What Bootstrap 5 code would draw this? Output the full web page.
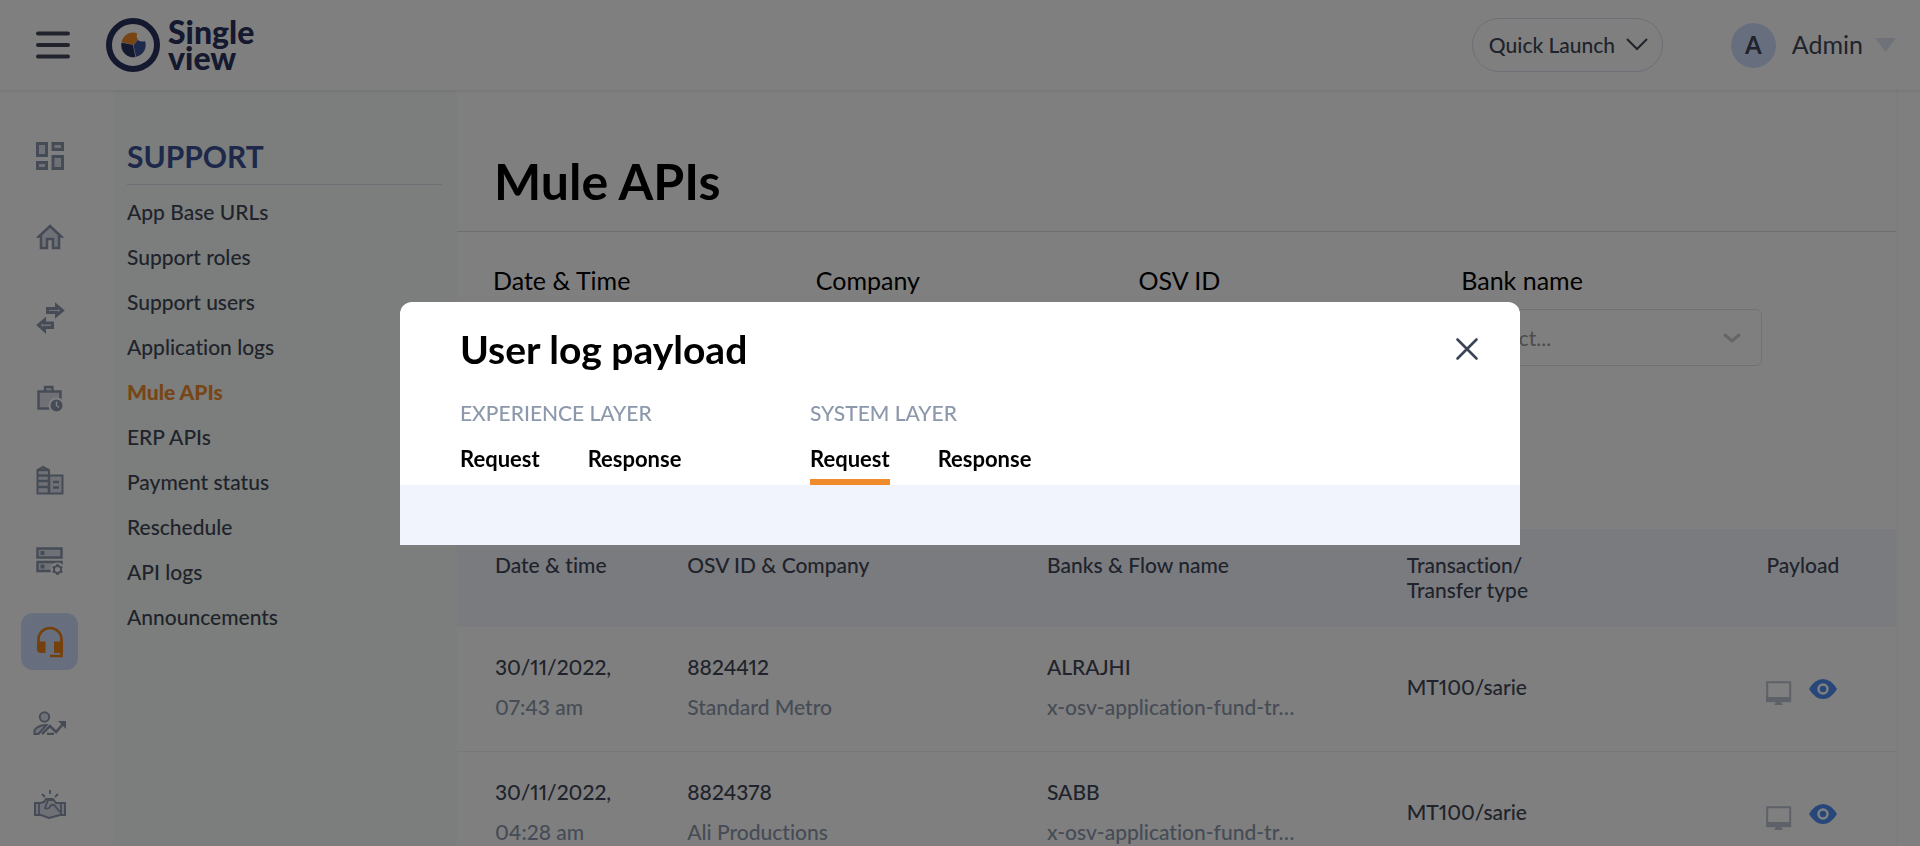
<!DOCTYPE html>
<html lang="en">
<head>
<meta charset="utf-8">
<meta name="viewport" content="width=device-width, initial-scale=1">
<title>Mule APIs</title>
<link href="https://cdn.jsdelivr.net/npm/bootstrap@5.3.0/dist/css/bootstrap.min.css" rel="stylesheet">
<style>
:root{--ink:#404757;--muted:#8c98ac;--accent:#f08b2c;--navy:#2a325e;--sky:#cfdffd}
body{font-family:Lato,"Liberation Sans",sans-serif;font-size:20px;line-height:25px;font-weight:500;font-variant-ligatures:none;color:var(--ink)}
.topbar{height:90px;padding:0 24px 0 36px;box-shadow:0 1px 3px rgba(0,0,0,.1);z-index:2}
.brandtext{font-size:32px;line-height:26px;font-weight:900;color:var(--navy)}
.quick{height:54px;width:191px;margin-right:68px;border:1px solid #dcdcee;border-radius:27px;padding:0 14px 2px 16px;font-size:21px;font-weight:500;color:var(--ink)}
.avatar{width:45px;height:45px;background:var(--sky);font-size:24px;padding-bottom:2px}
.admin{font-size:25px;font-weight:400;color:var(--ink);padding-bottom:2px}
.rail{width:113px;padding:37px 0 0 21px;gap:24px}
.rail a{width:57px;height:57px;border-radius:12px}
.rail a.active{background:var(--sky)}
.rail svg{fill:#dfe3ef;stroke:var(--muted);stroke-width:2}
.submenu{width:344px;background:#f7fcf9;padding:48px 15px 0 14px}
.submenu h2{font-size:30px;line-height:36px;font-weight:700;color:#3a5096;padding-bottom:10px;margin-bottom:4px;border-bottom:1px solid #dcdfe8}
.submenu a{font-size:21px;line-height:45px;color:var(--ink)}
.submenu a.active{color:var(--accent);font-weight:900}
.content{margin-right:24px;box-shadow:1px 0 2px rgba(0,0,0,.04)}
.pagetitle{font-size:50px;line-height:60px;font-weight:700;color:#000;padding:61px 37px 20px;border-bottom:1px solid #dcdcdc}
.filters{padding:33px 112px 163px 36px}
.filters label{font-size:25px;line-height:30px;font-weight:400;color:#000;margin-bottom:14px}
.filters .col{padding-right:22px}
.filters .form-control,.filters .form-select{height:57px;border:1px solid #dfe3ea;border-radius:6px;font-size:21px;padding-left:18px;color:#999}
.filters .form-select{background-size:18px 10px;background-position:right 20px center;background-image:url("data:image/svg+xml,%3Csvg xmlns='http://www.w3.org/2000/svg' viewBox='0 0 18 10'%3E%3Cpath d='M2 2l7 6 7-6' fill='none' stroke='%23ccc' stroke-width='3' stroke-linecap='round'/%3E%3C/svg%3E")}
.logs{table-layout:fixed;font-size:21px;font-variant-numeric:proportional-nums}
.logs th{background:#f4f6fe;height:98px;padding:23px 0 0;font-weight:500;color:var(--ink);vertical-align:top;border:0}
.logs td{height:124px;padding:20px 0 0;vertical-align:top;color:var(--ink);border-bottom:1px solid #f0f0f4}
.logs th:first-child,.logs td:first-child{padding-left:38px}
.logs td span{display:block;line-height:40px}
.logs .sub{color:var(--muted)}
.logs td.mid{padding-top:40px}
.logs td.acts{padding-top:52px}
.modal-dialog.payload{max-width:1120px}
.payload .modal-content{border:0;border-radius:12px 12px 0 0}
.payload .modal-header{border:0;padding:21px 36px 0 60px}
.payload h1{font-size:39px;line-height:52px;font-weight:700;color:#000}
.payload h3{font-size:21px;line-height:26px;font-weight:500;color:var(--muted);margin-bottom:18px}
.layers{padding:25px 60px 0}
.layer{width:350px}
.tabs{gap:48px}
.tabs button{border:0;border-bottom:6px solid transparent;background:none;padding:0 0 5px;font-size:22px;line-height:30px;font-weight:700;color:#000}
.tabs button.active{border-color:var(--accent)}
.payload .modal-body{background:#f1f4fd;height:60px;flex:none}
</style>
</head>
<body class="modal-open overflow-hidden">
<div class="vh-100 d-flex flex-column overflow-hidden">
  <header class="topbar d-flex align-items-center flex-shrink-0 bg-white position-relative">
    <button class="btn p-0 border-0 d-flex" aria-label="Menu"><svg width="34" height="28" stroke="#404757" stroke-width="4" stroke-linecap="round"><path d="M2 2.500h30M2 14h30M2 25.500h30"/></svg></button>
    <a href="#" class="d-flex align-items-center text-decoration-none flex-grow-1">
      <svg class="ms-4 me-2" width="66" height="54" viewBox="-12 0 66 54"><circle cx="27" cy="27" r="24" fill="#fff" stroke="#2a325e" stroke-width="6"/><path d="M27 27L15.500 24A12 12 0 0 1 31 15q-1 4 1 7z" fill="#f08b2c"/><path d="M27 27L15.500 24.500A12 12 0 0 0 29.500 39z" fill="#2a325e"/><path d="M27.500 27L32 22q3 2.500 7 1A12 12 0 0 1 30 38.800z" fill="#3c5498"/></svg>
      <span class="brandtext">Single<br>view</span>
    </a>
    <button class="quick bg-white d-flex align-items-center justify-content-between">Quick Launch <svg width="22" height="13" fill="none" stroke="#404757" stroke-width="2"><path d="M1 1l10 10L21 1"/></svg></button>
    <div class="d-flex align-items-center">
      <span class="avatar rounded-circle d-flex align-items-center justify-content-center fw-bold me-3">A</span>
      <a href="#" class="admin text-decoration-none me-2">Admin</a>
      <svg class="ms-1" width="21" height="14"><path d="M0 0h21L10.500 14z" fill="#dee5f2"/></svg>
    </div>
  </header>
  <div class="d-flex flex-grow-1 overflow-hidden">
    <nav class="rail d-flex flex-column flex-shrink-0 bg-white" aria-label="Sections">
      <a href="#" class="d-flex flex-shrink-0 align-items-center justify-content-center" aria-label="Dashboard"><svg width="28" height="28"><path style="stroke-width:3" d="M1.500 1.500h9v12h-9zM17 1.500h9.500v6H17zM17 14.500h9.500v12H17zM1.500 20.500h9v6h-9z"/></svg></a>
      <a href="#" class="d-flex flex-shrink-0 align-items-center justify-content-center" aria-label="Home"><svg width="28" height="26"><path d="M3 12.500L14 2l11 10.500h-2V24h-6v-9h-6v9H5V12.500z" style="stroke-width:2.600"/></svg></a>
      <a href="#" class="d-flex flex-shrink-0 align-items-center justify-content-center" aria-label="Transfers"><svg width="30" height="32"><path style="stroke-width:3" d="M12.500 6.500h9v-3l6 5-6 5v-3h-9zM17.500 21h-8v-3l-6 5 6 5.500v-3h8z"/></svg></a>
      <a href="#" class="d-flex flex-shrink-0 align-items-center justify-content-center" aria-label="Schedule"><svg width="28" height="27"><path style="stroke-width:2.400" d="M2.500 6.500h22v17h-22zM9 6V2h7.500v4"/><circle cx="20.500" cy="20.500" r="7" style="fill:#8c98ac;stroke:#fff"/><path d="M20.500 16.500v4l2.500 2" style="fill:none;stroke:#fff;stroke-width:1.500"/></svg></a>
      <a href="#" class="d-flex flex-shrink-0 align-items-center justify-content-center" aria-label="Companies"><svg width="28" height="30"><path d="M1.500 28.500V5L7 2l6 3v5.500h13.500v18z"/><path d="M13 10v18M2 5h11M2 10.500h11M2 16h11M2 22h11M17 17h6M17 22.500h6" style="stroke-width:2.600"/></svg></a>
      <a href="#" class="d-flex flex-shrink-0 align-items-center justify-content-center" aria-label="Server settings"><svg width="28" height="28"><path style="stroke-width:2.500" d="M1.500 1.500h24v9h-24zM1.500 15h24v9h-24z"/><path d="M6.500 4v4M6.500 17.500v4" style="stroke-width:4"/><circle cx="21.500" cy="22.500" r="7" style="fill:#fff;stroke:none"/><circle cx="21.500" cy="22.500" r="3.500" style="fill:#fff"/><path d="M21.500 17v2M21.500 26v2M16.800 19.800l1.700 1M24.500 24.200l1.700 1M16.800 25.200l1.700-1M24.500 20.800l1.700-1" style="stroke-width:2.400"/></svg></a>
      <a href="#" class="active d-flex flex-shrink-0 align-items-center justify-content-center" aria-label="Support"><svg width="26" height="32" style="stroke:#e98018;fill:none"><path style="stroke-width:2.600" d="M1.500 18v-4.500a11.500 11.500 0 0 1 23 0V30H13"/><path style="fill:#e98018;stroke:none" d="M0 15.500h8.500V27H4q-4 0-4-4zM17 15.500h9V27h-9z"/></svg></a>
      <a href="#" class="d-flex flex-shrink-0 align-items-center justify-content-center" aria-label="Growth"><svg width="34" height="24"><circle cx="11.500" cy="6" r="4.700"/><path d="M1.500 23v-4q4-5 12-5l-8 9z" /><path d="M9 23l8-8 6 6 7-8M14 23h7" style="fill:none;stroke-width:2.600"/><path d="M25 10h8v8z" style="fill:#8c98ac;stroke:none"/></svg></a>
      <a href="#" class="d-flex flex-shrink-0 align-items-center justify-content-center" aria-label="Partners"><svg width="34" height="30"><path d="M2 14h5l4-1 2-3h7l3 4h9v12h-5l-11 3-8-3H2z"/><path d="M6 14v12M28 14v12M20 11h-5l-3 8q4 2 6-3h3l6 7M17 1v4M9 5l3 3M25 5l-3 3" style="fill:none;stroke-width:1.800"/></svg></a>
    </nav>
    <aside class="submenu flex-shrink-0">
      <h2>SUPPORT</h2>
      <nav class="nav flex-column" aria-label="Support">
        <a class="text-decoration-none" href="#">App Base URLs</a>
        <a class="text-decoration-none" href="#">Support roles</a>
        <a class="text-decoration-none" href="#">Support users</a>
        <a class="text-decoration-none" href="#">Application logs</a>
        <a class="text-decoration-none active" href="#">Mule APIs</a>
        <a class="text-decoration-none" href="#">ERP APIs</a>
        <a class="text-decoration-none" href="#">Payment status</a>
        <a class="text-decoration-none" href="#">Reschedule</a>
        <a class="text-decoration-none" href="#">API logs</a>
        <a class="text-decoration-none" href="#">Announcements</a>
      </nav>
    </aside>
    <main class="content flex-grow-1">
      <h1 class="pagetitle mb-0">Mule APIs</h1>
      <form class="filters row g-0">
        <div class="col"><label class="d-block" for="f-date">Date &amp; Time</label><input id="f-date" class="form-control"></div>
        <div class="col"><label class="d-block" for="f-company">Company</label><input id="f-company" class="form-control"></div>
        <div class="col"><label class="d-block" for="f-osv">OSV ID</label><input id="f-osv" class="form-control"></div>
        <div class="col"><label class="d-block" for="f-bank">Bank name</label><select id="f-bank" class="form-select"><option>Select...</option></select></div>
      </form>
      <table class="logs w-100">
        <colgroup><col style="width:16%"><col style="width:25%"><col style="width:25%"><col style="width:25%"><col style="width:9%"></colgroup>
        <thead><tr><th>Date &amp; time</th><th>OSV ID &amp; Company</th><th>Banks &amp; Flow name</th><th>Transaction/<br>Transfer type</th><th>Payload</th></tr></thead>
        <tbody>
          <tr><td><span>30/11/2022,</span><span class="sub">07:43 am</span></td><td><span>8824412</span><span class="sub">Standard Metro</span></td><td><span>ALRAJHI</span><span class="sub">x-osv-application-fund-tr…</span></td><td class="mid"><span>MT100/sarie</span></td>
            <td class="acts"><div class="d-flex gap-3"><svg width="27" height="26"><path d="M1.200 3.200h23v19h-23z" fill="none" stroke="#bcc3cf" stroke-width="2"/><path d="M0 18h25v5H0zM10 23h5l2 3H8z" fill="#bcc3cf"/></svg><svg width="28" height="20"><path d="M0 10Q6 0 14 0t14 10q-6 10-14 10T0 10z" fill="#4f8df5"/><circle cx="14" cy="10" r="4.500" fill="#4f8df5" stroke="#fff" stroke-width="2.500"/></svg></div></td></tr>
          <tr><td><span>30/11/2022,</span><span class="sub">04:28 am</span></td><td><span>8824378</span><span class="sub">Ali Productions</span></td><td><span>SABB</span><span class="sub">x-osv-application-fund-tr…</span></td><td class="mid"><span>MT100/sarie</span></td>
            <td class="acts"><div class="d-flex gap-3"><svg width="27" height="26"><path d="M1.200 3.200h23v19h-23z" fill="none" stroke="#bcc3cf" stroke-width="2"/><path d="M0 18h25v5H0zM10 23h5l2 3H8z" fill="#bcc3cf"/></svg><svg width="28" height="20"><path d="M0 10Q6 0 14 0t14 10q-6 10-14 10T0 10z" fill="#4f8df5"/><circle cx="14" cy="10" r="4.500" fill="#4f8df5" stroke="#fff" stroke-width="2.500"/></svg></div></td></tr>
        </tbody>
      </table>
    </main>
  </div>
</div>
<div class="modal-backdrop show"></div>
<div class="modal show d-block" role="dialog" aria-modal="true" aria-labelledby="payload-title">
  <div class="modal-dialog modal-dialog-centered payload">
    <div class="modal-content overflow-hidden">
      <div class="modal-header d-flex justify-content-between">
        <h1 id="payload-title" class="mb-0">User log payload</h1>
        <button class="btn border-0 p-1 d-flex" aria-label="Close"><svg width="26" height="26" stroke="#3b4458" stroke-width="2.600" stroke-linecap="round"><path d="M3.500 3.500l19 19M22.500 3.500l-19 19"/></svg></button>
      </div>
      <div class="layers d-flex">
        <section class="layer"><h3>EXPERIENCE LAYER</h3><div class="tabs d-flex"><button>Request</button><button>Response</button></div></section>
        <section class="layer"><h3>SYSTEM LAYER</h3><div class="tabs d-flex"><button class="active">Request</button><button>Response</button></div></section>
      </div>
      <div class="modal-body p-0"></div>
    </div>
  </div>
</div>
<script src="https://cdn.jsdelivr.net/npm/bootstrap@5.3.0/dist/js/bootstrap.bundle.min.js"></script>
</body>
</html>
